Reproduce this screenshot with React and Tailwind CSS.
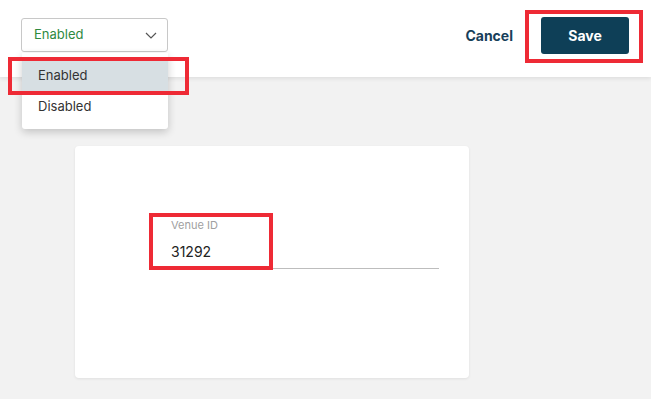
import React from "react";

export default function App() {
  const font = { fontFamily: "Inter, 'Noto Sans', sans-serif" };
  return (
    <div className="relative w-[651px] h-[399px] bg-[#f2f2f2] overflow-hidden" style={font}>
      {/* Header */}
      <div className="h-[77px] bg-white shadow-[0_2px_4px_rgba(0,0,0,0.08)] flex items-center justify-between pl-[21px] pr-[22px]">
        <div className="w-[147px] h-[34px] -mt-[7px] border border-[#c8c8c8] rounded-[3px] flex items-center justify-between pl-[12px] pr-[10px]">
          <span className="text-[13px] text-[#2f8a3f]">Enabled</span>
          <svg width="12" height="7" viewBox="0 0 12 7" fill="none" stroke="#555" strokeWidth="1.2">
            <path d="M1 1l5 5 5-5" />
          </svg>
        </div>
        <div className="flex items-center gap-[28px] -mt-[6px]">
          <span className="text-[14px] font-bold text-[#17405a]">Cancel</span>
          <button className="w-[88px] h-[37px] rounded-[3px] bg-[#0e3f57] text-white text-[14px] font-bold">Save</button>
        </div>
      </div>

      {/* Card */}
      <div className="ml-[75px] mt-[69px] w-[394px] h-[232px] bg-white rounded-[4px] shadow-[0_1px_3px_rgba(0,0,0,0.08)] pt-[71px] pl-[75px]">
        <div className="w-[289px] border-b border-[#bdbdbd] pl-[21px] pb-[7px]">
          <div className="text-[11px] text-[#a0a0a0] leading-[14px] pt-[1px]">Venue ID</div>
          <div className="text-[14px] text-[#222] leading-[18px] mt-[11px]">31292</div>
        </div>
      </div>

      {/* Dropdown menu */}
      <div className="absolute left-[22px] top-[53px] w-[146px] bg-white rounded-b-[3px] shadow-[0_3px_8px_rgba(0,0,0,0.2)] pt-[8px] pb-[7px]">
        <div className="h-[30px] bg-[#d7dfe3] flex items-center pl-[16px] text-[13px] text-[#333]">Enabled</div>
        <div className="h-[31px] flex items-center pl-[16px] text-[13px] text-[#333]">Disabled</div>
      </div>

      {/* Annotation boxes */}
      <div className="absolute left-[8px] top-[57px] w-[181px] h-[38px] border-[4px] border-[#ee2a35]" />
      <div className="absolute left-[525px] top-[10px] w-[118px] h-[53px] border-[4px] border-[#ee2a35]" />
      <div className="absolute left-[149px] top-[213px] w-[124px] h-[57px] border-[4px] border-[#ee2a35]" />
    </div>
  );
}
